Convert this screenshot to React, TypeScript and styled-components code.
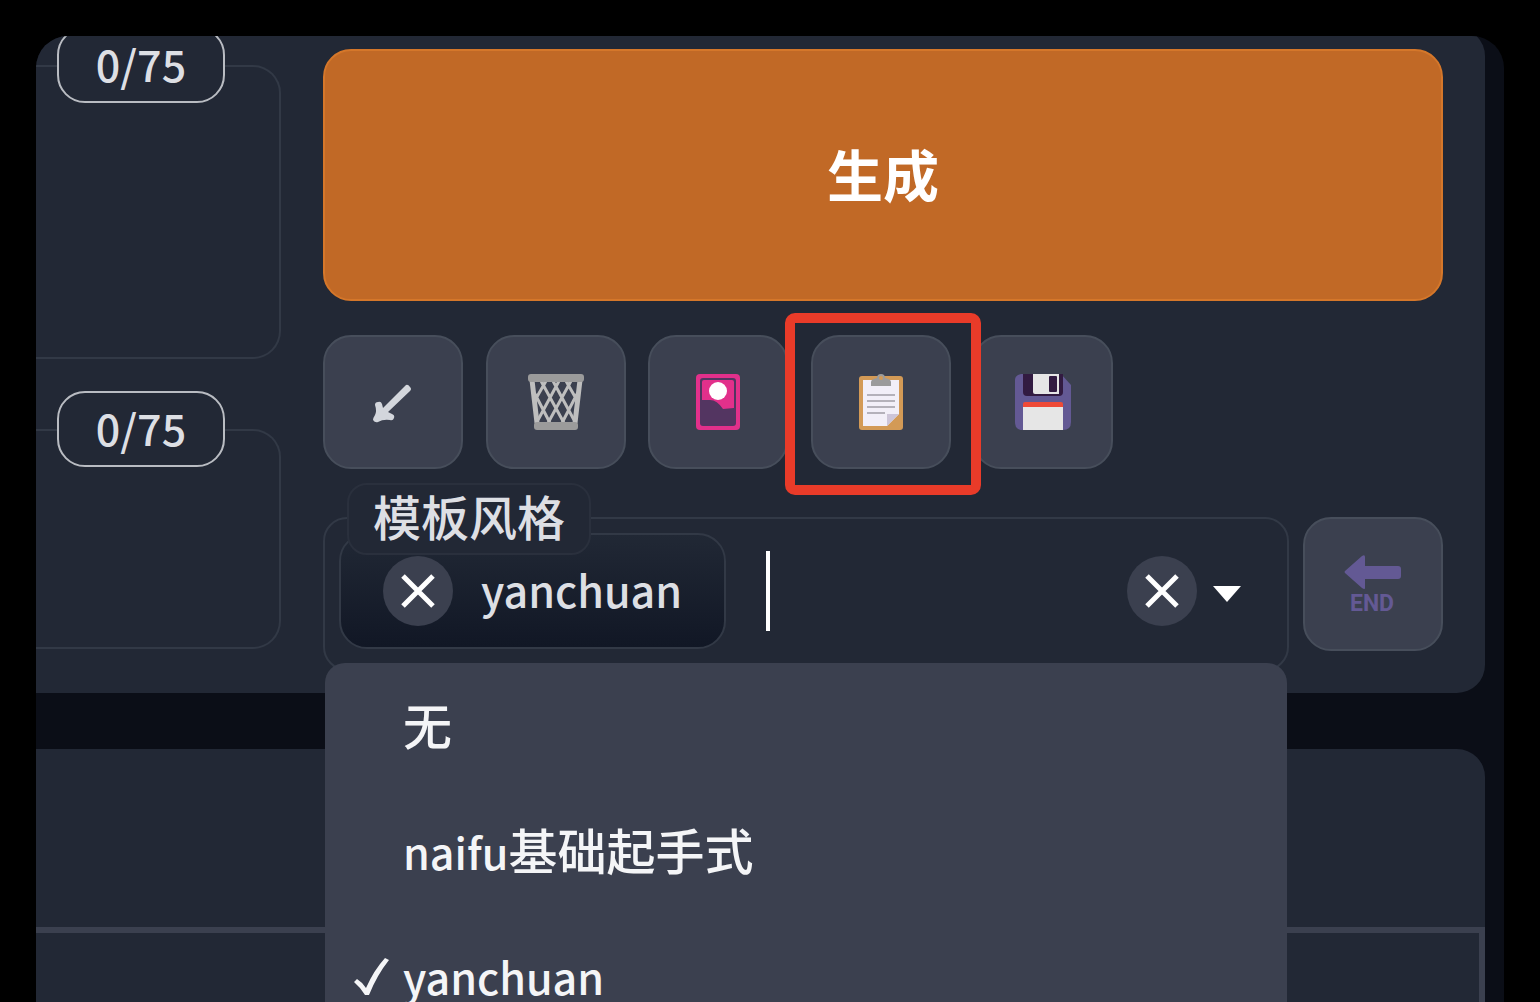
import React, { useState } from "react";
import styled, { createGlobalStyle } from "styled-components";

const c = {
  page: "#000",
  gutter: "#0b0e17",
  panel: "#222835",
  raised: "#3b404f",
  raisedLine: "#474e5b",
  line: "#323946",
  faint: "#2a303d",
  text: "#dddfe4",
  white: "#fff",
};

const GlobalStyle = createGlobalStyle`
  *, *::before, *::after { box-sizing: border-box; }
  body {
    margin: 0;
    background: ${c.page};
    color: ${c.text};
    font-family: "Noto Sans CJK SC", "Noto Sans", sans-serif;
    font-size: 43px;
    font-weight: 500;
    line-height: 64px;
  }
  button, input, textarea { font: inherit; color: inherit; margin: 0; }
`;

const Page = styled.div`
  height: 100vh;
  padding: 36px 36px 0;
  overflow: hidden;
`;

const Window = styled.main`
  height: 100%;
  padding-right: 19px;
  overflow: hidden;
  border-radius: 32px 32px 0 0;
  background: ${c.gutter};
`;

const Panel = styled.section`
  display: grid;
  grid-template-columns: 245px minmax(0, 1fr);
  column-gap: 42px;
  margin-top: -8px;
  padding: 21px 42px 22px 0;
  border-radius: 0 28px 28px 0;
  background: ${c.panel};
`;

const Prompts = styled.div`
  display: flex;
  flex-direction: column;
  gap: 70px;
  padding-top: 16px;
`;

const PromptField = styled.div<{ $height: number }>`
  position: relative;
  height: ${(p) => p.$height}px;
`;

const PromptInput = styled.textarea`
  display: block;
  width: 100%;
  height: 100%;
  padding: 40px 24px 16px;
  border: 2px solid ${c.line};
  border-left: 0;
  border-radius: 0 28px 28px 0;
  background: transparent;
  resize: none;
  outline: none;
`;

const Counter = styled.label`
  position: absolute;
  top: -38px;
  left: 21px;
  width: 168px;
  height: 76px;
  border: 2px solid #b9bcc2;
  border-radius: 28px;
  background: ${c.panel};
  line-height: 68px;
  text-align: center;
`;

const Actions = styled.div`
  display: flex;
  flex-direction: column;
`;

const Generate = styled.button`
  height: 252px;
  padding: 0 0 4px;
  border: 2px solid #d5772a;
  border-radius: 28px;
  background: #c16926;
  color: ${c.white};
  font-size: 56px;
  font-weight: 700;
`;

const Tools = styled.div`
  display: flex;
  justify-content: space-between;
  max-width: 790px;
  margin-top: 34px;
`;

const ToolButton = styled.button`
  display: flex;
  flex: none;
  align-items: center;
  justify-content: center;
  width: 140px;
  height: 134px;
  padding: 0;
  border: 2px solid ${c.raisedLine};
  border-radius: 28px;
  background: ${c.raised};
`;

const Highlighted = styled.div`
  position: relative;
  z-index: 1;
  &::after {
    content: "";
    position: absolute;
    inset: -22px -30px -26px -26px;
    border: 10px solid #e93b29;
    border-radius: 10px;
    pointer-events: none;
  }
`;

const StyleRow = styled.div`
  display: flex;
  align-items: flex-start;
  gap: 14px;
  margin-top: 48px;
`;

const Combo = styled.div`
  position: relative;
  display: flex;
  flex: 1;
  align-items: center;
  min-width: 0;
  height: 154px;
  padding: 0 46px 6px 14px;
  border: 2px solid ${c.line};
  border-radius: 24px;
`;

const ComboLabel = styled.label`
  position: absolute;
  top: -36px;
  left: 22px;
  height: 72px;
  padding: 0 24px;
  border: 2px solid ${c.faint};
  border-radius: 20px;
  background: ${c.panel};
  font-size: 48px;
  line-height: 60px;
`;

const Chip = styled.span`
  display: flex;
  flex: none;
  align-items: center;
  gap: 28px;
  height: 116px;
  padding: 0 42px;
  border: 2px solid ${c.line};
  border-radius: 28px;
  background: linear-gradient(#212835, #111725);
`;

const ChipText = styled.span`
  padding-bottom: 4px;
`;

const RoundButton = styled.button`
  display: flex;
  flex: none;
  align-items: center;
  justify-content: center;
  width: 70px;
  height: 70px;
  padding: 0;
  border: 0;
  border-radius: 50%;
  background: ${c.raised};
  color: ${c.white};
`;

const Caret = styled.span`
  flex: none;
  width: 4px;
  height: 80px;
  margin-left: 40px;
  background: ${c.white};
`;

const ComboInput = styled.input`
  flex: 1;
  min-width: 0;
  padding: 0;
  border: 0;
  outline: none;
  background: transparent;
  caret-color: transparent;
`;

const Arrow = styled.svg`
  flex: none;
  margin: 6px 0 0 16px;
`;

const Menu = styled.ul`
  position: absolute;
  z-index: 2;
  top: 144px;
  left: 0;
  right: 0;
  margin: 0;
  padding: 0;
  border-radius: 20px 20px 0 0;
  background: ${c.raised};
  color: #f4f5f7;
  list-style: none;
`;

const Option = styled.li`
  display: flex;
  align-items: center;
  height: 126px;
  padding-bottom: 4px;
`;

const Mark = styled.span`
  display: flex;
  flex: none;
  justify-content: flex-end;
  width: 64px;
  margin-right: 14px;
`;

const Han = styled.span`
  font-size: 49px;
`;

const Results = styled.section`
  height: 400px;
  margin-top: 56px;
  padding-top: 178px;
  border-radius: 0 28px 0 0;
  background: ${c.panel};
`;

const ResultsFrame = styled.div`
  height: 100%;
  border: solid ${c.raised};
  border-width: 6px 6px 0 0;
`;

const Cross = () => (
  <svg width="36" height="36" viewBox="0 0 36 36" fill="none" stroke="currentColor" strokeWidth="5" aria-hidden="true">
    <path d="M3 3 33 33M33 3 3 33" />
  </svg>
);

const Check = () => (
  <svg width="36" height="42" viewBox="0 0 36 42" fill="currentColor" aria-hidden="true">
    <path d="M1 27 4 24Q9 27 13 33Q21 15 32 3L36 5Q24 20 16 40H12Q8 33 1 27Z" />
  </svg>
);

const ArrowIcon = () => (
  <svg width="56" height="56" viewBox="0 0 56 56" fill="#d3d6dc" aria-hidden="true">
    <path d="M41 11Q43 10 45 13Q47 15 45 17L23 38 27 40Q30 41 29 44Q28 47 25 46Q18 45 13 48Q10 49 8 46Q8 44 10 41Q12 37 10 31Q10 28 13 28Q16 27 17 30L18 34Z" />
  </svg>
);

const TrashIcon = () => (
  <svg width="56" height="56" viewBox="0 0 56 56" fill="none" aria-hidden="true">
    <path d="M4 6 9 49M52 6 47 49" stroke="#bebebe" strokeWidth="5" />
    <path
      d="M13 7 36 49M25 7 46 46M38 7 50 28M7 20 22 49M43 7 20 49M31 7 10 46M18 7 6 28M49 20 34 49"
      stroke="#bebebe"
      strokeWidth="3"
    />
    <rect x="0" y="0" width="56" height="8" rx="3" fill="#9b9b9b" />
    <rect x="6" y="48" width="44" height="8" rx="3" fill="#9b9b9b" />
  </svg>
);

const CardIcon = () => (
  <svg width="56" height="56" viewBox="0 0 56 56" aria-hidden="true">
    <rect x="6" y="0" width="44" height="56" rx="4" fill="#e2308b" />
    <rect x="10" y="4" width="36" height="48" rx="3" fill="#533561" />
    <path d="M12 8Q12 6 14 6H42Q44 6 44 8V34L33 35Q27 26 20 26H12Z" fill="#e2308b" />
    <circle cx="28" cy="17" r="9" fill="#fff" />
  </svg>
);

const ClipboardIcon = () => (
  <svg width="56" height="56" viewBox="0 0 56 56" aria-hidden="true">
    <rect x="6" y="2" width="44" height="54" rx="3" fill="#d39a56" />
    <path d="M10 6H46V40L34 52H10Z" fill="#f2eff8" />
    <path d="M34 40H46L34 52Z" fill="#cdc5d8" />
    <path d="M14 21H42M14 27H42M14 33H42M14 39H32" stroke="#b4b1ba" strokeWidth="2" />
    <path d="M18 12V8Q18 5 24 4Q24 0 28 0Q32 0 32 4Q38 5 38 8V12Z" fill="#9b9b9b" />
    <circle cx="28" cy="4" r="2" fill="#d39a56" />
  </svg>
);

const FloppyIcon = () => (
  <svg width="56" height="56" viewBox="0 0 56 56" aria-hidden="true">
    <path d="M6 0H46L56 11V48Q56 56 48 56H8Q0 56 0 48V6Q0 1 6 0Z" fill="#635994" />
    <path d="M8 0H48V18Q48 22 44 22H12Q8 22 8 18Z" fill="#321b41" />
    <path d="M18 0H44V20H20Q18 20 18 18Z" fill="#e6e6e6" />
    <rect x="34" y="2" width="8" height="16" rx="1" fill="#321b41" />
    <path d="M8 34V30Q8 28 10 28H46Q48 28 48 30V34Z" fill="#ef4a37" />
    <rect x="8" y="33" width="40" height="23" fill="#e6e6e6" />
  </svg>
);

const EndIcon = () => (
  <svg width="58" height="72" viewBox="0 -6 58 72" fill="#635994" aria-hidden="true">
    <path d="M1 17 18 2Q21 0 21 3V12H54Q57 12 57 15V22Q57 25 54 25H21V34Q21 36 18 34L1 19Q0 18 1 17Z" />
    <text x="28" y="57" textAnchor="middle" fontFamily="Roboto, sans-serif" fontWeight="700" fontSize="23">
      END
    </text>
  </svg>
);

export default function App() {
  const [query, setQuery] = useState("");

  return (
    <>
      <GlobalStyle />
      <Page>
        <Window>
          <Panel>
            <Prompts>
              <PromptField $height={294}>
                <PromptInput id="prompt" />
                <Counter htmlFor="prompt">0/75</Counter>
              </PromptField>
              <PromptField $height={220}>
                <PromptInput id="negative" />
                <Counter htmlFor="negative">0/75</Counter>
              </PromptField>
            </Prompts>
            <Actions>
              <Generate type="button">生成</Generate>
              <Tools>
                <ToolButton type="button" aria-label="读取参数"><ArrowIcon /></ToolButton>
                <ToolButton type="button" aria-label="清空"><TrashIcon /></ToolButton>
                <ToolButton type="button" aria-label="附加网络"><CardIcon /></ToolButton>
                <Highlighted>
                  <ToolButton type="button" aria-label="应用风格"><ClipboardIcon /></ToolButton>
                </Highlighted>
                <ToolButton type="button" aria-label="保存风格"><FloppyIcon /></ToolButton>
              </Tools>
              <StyleRow>
                <Combo>
                  <Chip>
                    <RoundButton type="button" aria-label="移除"><Cross /></RoundButton>
                    <ChipText>yanchuan</ChipText>
                  </Chip>
                  <Caret />
                  <ComboInput id="styles" value={query} onChange={(e) => setQuery(e.target.value)} />
                  <RoundButton type="button" aria-label="全部移除"><Cross /></RoundButton>
                  <Arrow width="28" height="16" viewBox="0 0 28 16" aria-hidden="true">
                    <path d="M0 0H28L14 16Z" fill="#fff" />
                  </Arrow>
                  <ComboLabel htmlFor="styles">模板风格</ComboLabel>
                  <Menu>
                    <Option><Mark /><Han>无</Han></Option>
                    <Option><Mark /><span>naifu<Han>基础起手式</Han></span></Option>
                    <Option><Mark><Check /></Mark>yanchuan</Option>
                  </Menu>
                </Combo>
                <ToolButton type="button" aria-label="END"><EndIcon /></ToolButton>
              </StyleRow>
            </Actions>
          </Panel>
          <Results>
            <ResultsFrame />
          </Results>
        </Window>
      </Page>
    </>
  );
}
